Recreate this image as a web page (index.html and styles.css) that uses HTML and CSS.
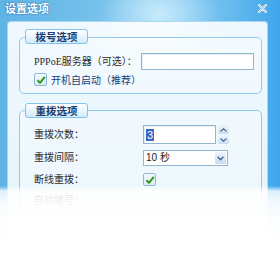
FILE: index.html
```html
<!DOCTYPE html>
<html lang="zh">
<head>
<meta charset="utf-8">
<link rel="stylesheet" href="styles.css">
</head>
<body>
<div class="window">
  <div class="titlebar">
    <span class="title">设置选项</span>
    <svg class="close" width="9" height="9" viewBox="0 0 9 9"><path d="M1 1 L8 8 M8 1 L1 8" stroke="#eef4f8" stroke-width="2.2" stroke-linecap="round"/><path d="M1 1 L8 8 M8 1 L1 8" stroke="#9fb8c8" stroke-width="0.8" stroke-linecap="round"/></svg>
  </div>
  <div class="panel">
    <section class="group g1">
      <div class="tab">拨号选项</div>
      <div class="row">
        <span class="label">PPPoE服务器（可选）：</span>
        <span class="input"></span>
      </div>
      <div class="checkrow">
        <span class="cb"><svg width="10" height="10" viewBox="0 0 10 10"><path d="M1.5 5.2 L4 7.8 L8.8 1.8" fill="none" stroke="#2e9a1e" stroke-width="2" stroke-linejoin="round"/></svg></span>
        <span class="cbtext">开机自启动（推荐）</span>
      </div>
    </section>
    <section class="group g2">
      <div class="tab">重拨选项</div>
      <div class="row r-spin">
        <span class="label">重拨次数：</span>
        <span class="ctl">
          <span class="spin"><span class="sel">3</span></span>
          <span class="spinbtns">
            <span class="sbtn"><svg width="7" height="4" viewBox="0 0 7 4"><path d="M0.5 3.5 L3.5 0.8 L6.5 3.5" fill="none" stroke="#47658f" stroke-width="1.1"/></svg></span>
            <span class="sbtn"><svg width="7" height="4" viewBox="0 0 7 4"><path d="M0.5 0.5 L3.5 3.2 L6.5 0.5" fill="none" stroke="#47658f" stroke-width="1.1"/></svg></span>
          </span>
        </span>
      </div>
      <div class="row r-select">
        <span class="label">重拨间隔：</span>
        <span class="select"><span class="val">10 秒</span><span class="dd"><svg width="7" height="5" viewBox="0 0 7 5"><path d="M0.6 0.8 L3.5 3.8 L6.4 0.8" fill="none" stroke="#47658f" stroke-width="1.4"/></svg></span></span>
      </div>
      <div class="row r-check">
        <span class="label">断线重拨：</span>
        <span class="cb"><svg width="10" height="10" viewBox="0 0 10 10"><path d="M1.5 5.2 L4 7.8 L8.8 1.8" fill="none" stroke="#2e9a1e" stroke-width="2" stroke-linejoin="round"/></svg></span>
      </div>
      <div class="row">
        <span class="label">自动拨号：</span>
      </div>
    </section>
  </div>
  <div class="fade"></div>
</div>
</body>
</html>
```
FILE: styles.css
```css
html, body {
  margin: 0;
  padding: 0;
}
body {
  width: 280px;
  height: 270px;
  overflow: hidden;
  font-family: "Liberation Serif", "Noto Sans CJK SC", serif;
  font-size: 10px;
  color: #2a2a2a;
}
.window {
  position: relative;
  height: 270px;
  display: flex;
  flex-direction: column;
  background:
    radial-gradient(ellipse 60px 40px at 160px 14px, rgba(220,245,255,0.75), rgba(220,245,255,0) 100%),
    linear-gradient(90deg, #5fb4e6 0, #72bfea 30%, #8ccdf1 55%, #6cbdee 80%, #3fa6ec 100%);
}
.titlebar {
  height: 21px;
  flex: none;
  display: flex;
  justify-content: space-between;
  align-items: flex-start;
  padding: 2px 13px 0 5px;
  box-sizing: border-box;
}
.title {
  font-family: "Noto Sans CJK SC", sans-serif;
  font-size: 11px;
  line-height: 13px;
  font-weight: bold;
  color: #ffffff;
  text-shadow: 0 0 2px #2a6ea8, 0 0 1px #2a6ea8;
}
.close {
  margin-top: 2px;
}
.panel {
  flex: 1;
  margin: 0 12px 0 7px;
  border: 1px solid #a9d8f3;
  border-bottom: none;
  border-radius: 4px 4px 0 0;
  background:
    radial-gradient(ellipse 90px 60px at 140px 0, rgba(255,255,255,0.6), rgba(255,255,255,0)),
    linear-gradient(180deg, #eef8fe 0, #e6f4fc 100%);
  padding: 15px 5px 0 11px;
}
.group {
  border: 1px solid #8ecbef;
  border-radius: 5px;
  background: rgba(255,255,255,0.25);
  padding: 0 0 7px 14px;
}
.g2 {
  margin-top: 16px;
}
.tab {
  width: 61px;
  height: 13px;
  margin: -9px 0 0 -9px;
  border: 1px solid #84c2ea;
  border-radius: 3px;
  background: linear-gradient(180deg, #ffffff 0, #e9f6fd 50%, #cfe9f9 100%);
  font-family: "Noto Sans CJK SC", sans-serif;
  font-size: 10.5px;
  line-height: 13px;
  font-weight: bold;
  color: #1e3d70;
  text-align: center;
}
.g2 .tab {
  margin-top: -8px;
}
.row {
  display: grid;
  grid-template-columns: 107px auto;
  align-items: center;
}
.g1 .row {
  margin-top: 9px;
  height: 17px;
}
.label {
  font-family: "Liberation Serif", "Noto Sans CJK SC", serif;
  font-size: 10px;
  line-height: 12px;
  color: #2c2c2c;
  white-space: nowrap;
}
.input {
  width: 111px;
  height: 15px;
  border: 1px solid #93b5cd;
  background: #ffffff;
  box-shadow: inset 1px 1px 0 #e3edf4;
}
.checkrow {
  display: flex;
  align-items: center;
  gap: 4px;
  margin-top: 3px;
  height: 13px;
}
.cb {
  width: 11px;
  height: 11px;
  border: 1px solid #8fb7d6;
  border-radius: 2px;
  background: linear-gradient(180deg, #f4fafe, #dcebf6);
  display: flex;
  align-items: center;
  justify-content: center;
}
.cbtext {
  font-family: "Noto Sans CJK SC", sans-serif;
  font-size: 10px;
  line-height: 12px;
  color: #1c3c78;
}
.g2 .row {
  grid-template-columns: 109px auto;
}
.r-spin {
  margin-top: 7px;
  height: 19px;
}
.ctl {
  display: flex;
  gap: 2px;
}
.spin {
  width: 69px;
  height: 17px;
  border: 1px solid #93b5cd;
  background: #ffffff;
  box-shadow: inset 1px 1px 0 #e3edf4;
  display: flex;
  align-items: center;
  padding-left: 2px;
  box-sizing: content-box;
}
.sel {
  background: #3567c9;
  color: #ffffff;
  font-family: "Liberation Sans", sans-serif;
  font-size: 11px;
  line-height: 12px;
  padding: 0 1px;
}
.spinbtns {
  display: flex;
  flex-direction: column;
  gap: 1px;
}
.sbtn {
  width: 11px;
  height: 9px;
  border-radius: 1px;
  background: linear-gradient(180deg, #eef6fd, #c7dff3);
  display: flex;
  align-items: center;
  justify-content: center;
}
.r-select {
  margin-top: 6px;
  height: 16px;
}
.select {
  width: 83px;
  height: 14px;
  border: 1px solid #93b5cd;
  background: #ffffff;
  display: flex;
  align-items: center;
  justify-content: space-between;
}
.val {
  padding-left: 2px;
  font-family: "Liberation Sans", "Noto Sans CJK SC", sans-serif;
  font-size: 10px;
  line-height: 12px;
  color: #1a1a1a;
}
.dd {
  width: 11px;
  height: 12px;
  margin-right: 1px;
  border-radius: 1px;
  background: linear-gradient(180deg, #eef6fd, #c3dcf2);
  display: flex;
  align-items: center;
  justify-content: center;
}
.r-check {
  margin-top: 7px;
  height: 13px;
}
.g2 .row:last-child {
  margin-top: 9px;
}
.fade {
  position: absolute;
  left: 0;
  right: 0;
  top: 186px;
  bottom: 0;
  background: linear-gradient(180deg, rgba(255,255,255,0) 0, rgba(255,255,255,0.82) 5px, rgba(255,255,255,0.93) 16px, rgba(255,255,255,0.985) 34px, #ffffff 60px);
}
```
